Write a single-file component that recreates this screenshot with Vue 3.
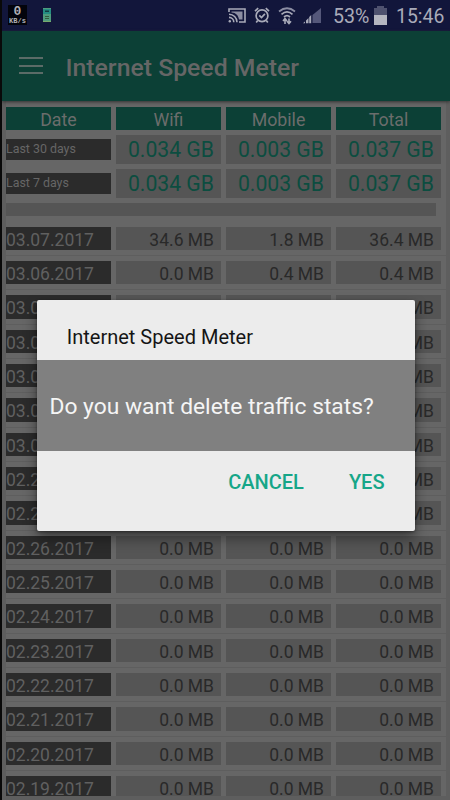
<script setup>
const headers = ['Date', 'Wifi', 'Mobile', 'Total']
const totals = [
  ['Last 30 days', '0.034 GB', '0.003 GB', '0.037 GB'],
  ['Last 7 days', '0.034 GB', '0.003 GB', '0.037 GB'],
]
const dates = [
  '03.07', '03.06', '03.05', '03.04', '03.03', '03.02', '03.01', '02.28', '02.27',
  '02.26', '02.25', '02.24', '02.23', '02.22', '02.21', '02.20', '02.19',
]
const usage = { '03.07': ['34.6', '1.8', '36.4'], '03.06': ['0.0', '0.4', '0.4'] }
const days = dates.map((d) => ({ date: d + '.2017', values: usage[d] || ['0.0', '0.0', '0.0'] }))
</script>

<template>
  <div class="screen">
    <header class="status">
      <div class="rate"><b>0</b><span>KB/s</span></div>
      <svg class="device" width="8" height="14" viewBox="0 0 8 14">
        <rect width="8" height="14" fill="#4f9c7d" />
        <rect y="1" width="8" height="5" fill="#258d82" />
        <rect x="2" y="2.5" width="4" height="1.5" fill="#123c42" />
        <path d="M2 8.5h4M2 10.5h4" stroke="#315c3e" />
        <path d="M0 13.5h8" stroke="#78a96c" />
      </svg>
      <svg class="cast" width="18" height="15" viewBox="0 0 18 15" fill="none" stroke="#a9abb9" stroke-width="1.6">
        <path d="M1 4V1h16v13h-6" />
        <path d="M3.5 3.5h11v8H11C10 7 8 5 3.5 4.6Z" fill="#8c8ea2" stroke="none" />
        <path d="M1 6.2a8 8 0 0 1 8 8M1 9.4a4.8 4.8 0 0 1 4.8 4.8" />
        <circle cx="1.8" cy="13.2" r="1.2" fill="#a9abb9" stroke="none" />
      </svg>
      <svg class="alarm" width="16" height="17" viewBox="0 0 16 17" fill="none" stroke="#a9abb9" stroke-width="1.7">
        <circle cx="8" cy="8.8" r="5.9" />
        <path d="M1 4.2l3.2-3M15 4.2l-3.2-3M3.7 13.5l-1.5 2M12.3 13.5l1.5 2M5.3 8.3l2.2 2.2 3.4-3.6" />
      </svg>
      <svg class="wifi" width="18" height="18" viewBox="0 0 18 18" fill="none" stroke="#a9abb9" stroke-width="1.7">
        <path d="M1 4.5q8-6.5 16 0" stroke="#8b8da2" />
        <path d="M3.5 7.3q5.5-4.7 11 0M6 10q3-2.7 6 0" />
        <path d="M7 17v-5M5 14l2-2.4L9 14M11 11.5v5M9 14.2l2 2.4 2-2.4" stroke-width="1.6" />
      </svg>
      <svg class="signal" width="18" height="17" viewBox="0 0 18 17">
        <path d="M9.5 16V8L18 1v15Z" fill="#55587a" />
        <path d="M0 16.3l2-1.8v1.8ZM3 16.3v-2.7L5.5 11v5.3ZM6.2 16.3V10l2-2v8.3Z" fill="#a9abb9" />
      </svg>
      <span class="percent">53%</span>
      <svg class="battery" width="13" height="19" viewBox="0 0 13 19">
        <path d="M0 2h3V0h7v2h3v7H0Z" fill="#4f526f" />
        <path d="M0 9h13v10H0Z" fill="#b5b6c0" />
      </svg>
      <span class="clock">15:46</span>
    </header>

    <div class="toolbar">
      <div class="menu"><i></i><i></i><i></i></div>
      <h1>Internet Speed Meter</h1>
    </div>

    <main>
      <div class="row heads"><div v-for="h in headers" :key="h">{{ h }}</div></div>
      <div v-for="t in totals" :key="t[0]" class="row total">
        <div v-for="(v, i) in t" :key="i" :class="i ? 'sum' : 'period'">{{ v }}</div>
      </div>
      <div class="bar"></div>
      <div class="list">
        <div v-for="d in days" :key="d.date" class="item">
          <div class="row day">
            <div class="date">{{ d.date }}</div>
            <div v-for="(v, i) in d.values" :key="i" class="value">{{ v }} MB</div>
          </div>
        </div>
      </div>
    </main>

    <section class="dialog">
      <h2>Internet Speed Meter</h2>
      <p>Do you want delete traffic stats?</p>
      <footer><button class="cancel">CANCEL</button><button>YES</button></footer>
    </section>
  </div>
</template>

<style>
body { margin: 0; overflow: hidden; }
</style>

<style scoped>
* { box-sizing: border-box; }
.screen {
  position: relative; width: 450px; height: 800px; overflow: hidden;
  background: #5e5e5e; border-left: 2px solid #090909;
  font-family: Roboto, "Liberation Sans", sans-serif; white-space: nowrap;
}
.status { height: 31px; background: #12163b; display: flex; align-items: flex-start; color: #a9abb9; }
.status svg { flex: none; display: block; }
.rate {
  width: 19px; height: 20px; margin: 5px 0 0 6px; background: #03040c; color: #b0b0b5;
  display: flex; flex-direction: column; align-items: center; flex: none;
}
.rate b { font: bold 13px/14px "Liberation Mono", monospace; }
.rate span { font: bold 7px/5px "Liberation Mono", monospace; }
.device { margin: 8px 0 0 16px; }
.cast { margin: 8px 0 0 177px; }
.alarm { margin: 7px 0 0 8px; }
.wifi { margin: 7px 0 0 8px; }
.signal { margin: 7px 0 0 7px; }
.percent { width: 36px; margin: 5px 0 0 12px; font-size: 19.6px; line-height: 24px; }
.battery { margin: 6px 0 0 5px; }
.clock { margin: 5px 0 0 9px; font-size: 19.4px; line-height: 24px; }

.toolbar {
  height: 70px; padding-left: 17px; display: flex; align-items: center;
  background: #0c4036; box-shadow: 0 1px 3px #333; position: relative;
}
.menu { width: 24px; height: 17px; display: flex; flex-direction: column; justify-content: space-between; margin-bottom: 1px; }
.menu i { height: 2px; background: #5b6b67; }
h1 { margin: 4px 0 0 22.5px; font-size: 24.8px; line-height: 30px; font-weight: 500; color: #666; }

main { width: 440px; margin-left: 4px; padding-top: 6px; background: #666; height: 695px; }
.row { display: grid; grid-template-columns: repeat(4, 105px); grid-template-rows: 100%; gap: 5px; }
.heads { height: 23px; }
.heads div { background: #0c4036; color: #6b6d6c; font-size: 17.8px; line-height: 25px; text-align: center; }
.total { height: 29px; margin-top: 5px; align-items: center; }
.sum { height: 29px; background: #555; color: #0c4d40; font-size: 21.2px; line-height: 30px; text-align: right; padding-right: 7px; }
.period { height: 21px; background: #2b2b2b; color: #666; font-size: 12.4px; line-height: 20px; }
.bar { width: 430px; height: 12.5px; margin-top: 5px; background: #555; }
.list { margin-top: 11px; height: 569px; overflow: hidden; }
.item { height: 34.35px; }
.item::after { content: ""; display: block; height: 1px; margin-top: 5px; background: #5e5e5e; }
.day { height: 23.5px; font-size: 17.5px; line-height: 26px; }
.date { background: #2b2b2b; color: #606060; }
.value { background: #555; color: #292929; text-align: right; padding-right: 7px; }

.dialog {
  position: absolute; left: 35.3px; top: 300px; width: 377.5px; height: 231px;
  background: #ececec; border-radius: 2px; box-shadow: 0 7px 14px rgba(0, 0, 0, .42), 0 1px 3px rgba(0, 0, 0, .4);
  display: flex; flex-direction: column; overflow: hidden;
}
h2 { margin: 0; height: 60px; padding: 14px 0 0 29.5px; font-size: 20px; line-height: 46px; font-weight: 400; color: #151515; }
p { margin: 0; height: 91px; padding-left: 12.2px; background: #808080; color: #f5f5f5; font-size: 22.8px; line-height: 94px; }
footer { display: flex; justify-content: flex-end; gap: 45px; padding: 16px 30.3px 0 0; }
button { border: 0; padding: 0; background: none; color: #16a688; font-family: inherit; font-size: 20px; line-height: 30px; font-weight: 500; }
</style>
